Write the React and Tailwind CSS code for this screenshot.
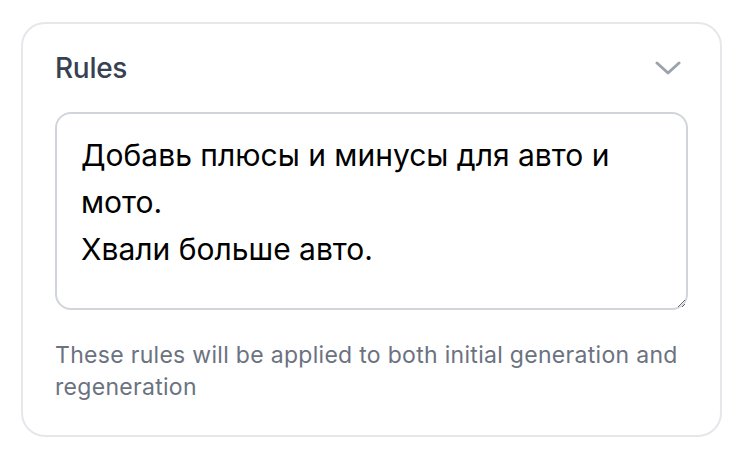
import React from 'react';

export default function App() {
  return (
    <div className="min-h-screen bg-white pt-[22px] pl-[21px] pr-[28px]" style={{ fontFamily: 'Inter, "Noto Sans", sans-serif' }}>
      <div className="w-[701px] rounded-[24px] border-2 border-[#e5e7eb] px-[32px] pt-[24px] pb-[32px]">
        {/* Header */}
        <div className="flex items-center justify-between h-[40px]">
          <span className="text-[28px] font-medium text-[#374151] tracking-[-0.3px]">Rules</span>
          <svg className="mr-[7px]" width="26" height="14" viewBox="0 0 26 14" fill="none" stroke="#9ca3af" strokeWidth="3" strokeLinecap="round" strokeLinejoin="round">
            <path d="M2 2 L13 12 L24 2" />
          </svg>
        </div>

        <textarea
          className="mt-[24px] block w-full h-[198px] rounded-[16px] border-2 border-[#d1d5db] px-[24px] py-[18px] text-[30px] leading-[47px] text-black resize-y outline-none"
          defaultValue={'Добавь плюсы и минусы для авто и мото.\nХвали больше авто.'}
          spellCheck={false}
        />

        <p className="mt-[29px] text-[23px] leading-[32px] text-[#6b7280] tracking-[0.3px]">
          These rules will be applied to both initial generation and regeneration
        </p>
      </div>
    </div>
  );
}
